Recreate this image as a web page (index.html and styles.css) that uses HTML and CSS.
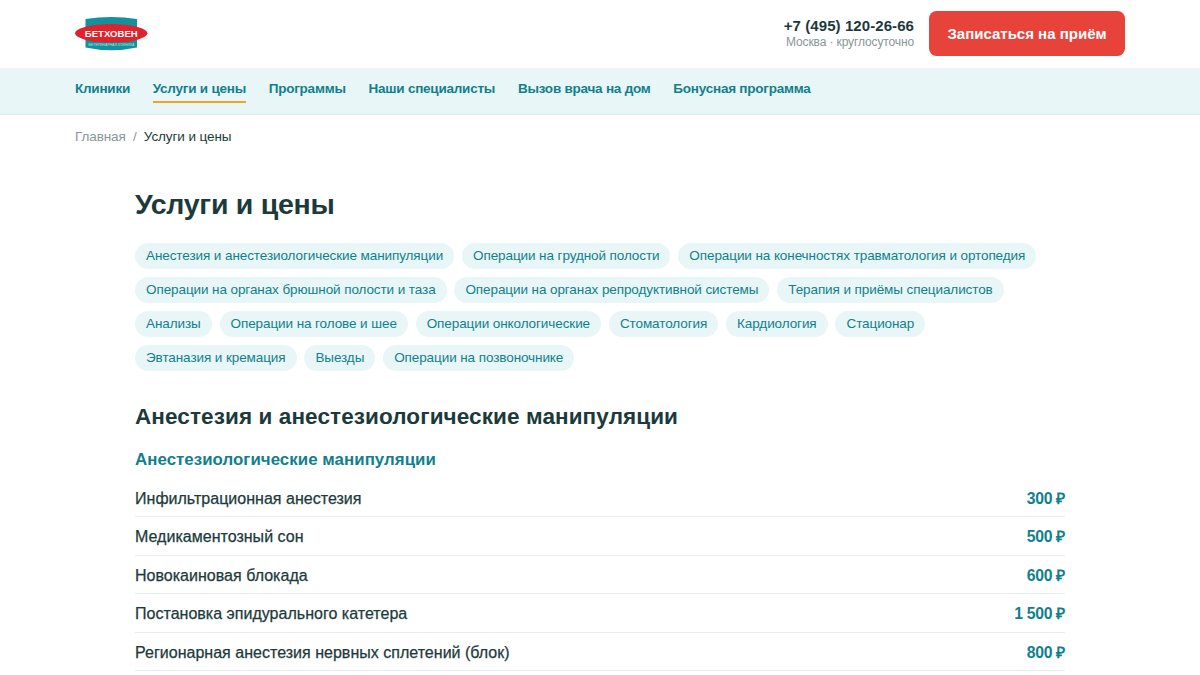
FILE: index.html
```html
<!DOCTYPE html>
<html lang="ru">
<head>
    <meta charset="UTF-8">
    <meta name="viewport" content="width=device-width, initial-scale=1.0">
    <title>Услуги и цены</title>
    <link rel="stylesheet" href="styles.css">
</head>
<body>
    <header class="header">
        <div class="container header-inner">
            <a class="logo" href="#" aria-label="Бетховен">
                <svg width="73" height="35" viewBox="0 0 73 35">
                    <path d="M10.500 3Q36.300 -1 62 3V31.500Q36.300 37 10.500 31.500Z" fill="#13919c"/>
                    <ellipse cx="36.200" cy="17.300" rx="36.200" ry="9.300" fill="#e1212b"/>
                    <text class="logo-name" x="36.300" y="20.800" textLength="53" lengthAdjust="spacingAndGlyphs">БЕТХОВЕН</text>
                    <text class="logo-sub" x="36.300" y="30.300" textLength="46" lengthAdjust="spacingAndGlyphs">ВЕТЕРИНАРНАЯ КЛИНИКА</text>
                </svg>
            </a>
            <div class="header-right">
                <div class="contact">
                    <a class="phone" href="tel:+74951202666">+7 (495) 120-26-66</a>
                    <div class="schedule">Москва · круглосуточно</div>
                </div>
                <button class="btn">Записаться на приём</button>
            </div>
        </div>
    </header>

    <nav class="nav">
        <div class="container nav-inner">
            <a href="#">Клиники</a>
            <a href="#" class="active">Услуги и цены</a>
            <a href="#">Программы</a>
            <a href="#">Наши специалисты</a>
            <a href="#">Вызов врача на дом</a>
            <a href="#">Бонусная программа</a>
        </div>
    </nav>

    <div class="container breadcrumbs">
        <a href="#">Главная</a>
        <span class="sep">/</span>
        <span class="current">Услуги и цены</span>
    </div>

    <main class="content">
        <h1>Услуги и цены</h1>

        <div class="chips">
            <a href="#">Анестезия и анестезиологические манипуляции</a>
            <a href="#">Операции на грудной полости</a>
            <a href="#">Операции на конечностях травматология и ортопедия</a>
            <a href="#">Операции на органах брюшной полости и таза</a>
            <a href="#">Операции на органах репродуктивной системы</a>
            <a href="#">Терапия и приёмы специалистов</a>
            <a href="#">Анализы</a>
            <a href="#">Операции на голове и шее</a>
            <a href="#">Операции онкологические</a>
            <a href="#">Стоматология</a>
            <a href="#">Кардиология</a>
            <a href="#">Стационар</a>
            <a href="#">Эвтаназия и кремация</a>
            <a href="#">Выезды</a>
            <a href="#">Операции на позвоночнике</a>
        </div>

        <h2>Анестезия и анестезиологические манипуляции</h2>
        <h3>Анестезиологические манипуляции</h3>

        <ul class="prices">
            <li><span class="name">Инфильтрационная анестезия</span><span class="price">300 ₽</span></li>
            <li><span class="name">Медикаментозный сон</span><span class="price">500 ₽</span></li>
            <li><span class="name">Новокаиновая блокада</span><span class="price">600 ₽</span></li>
            <li><span class="name">Постановка эпидурального катетера</span><span class="price">1 500 ₽</span></li>
            <li><span class="name">Регионарная анестезия нервных сплетений (блок)</span><span class="price">800 ₽</span></li>
        </ul>
    </main>
</body>
</html>
```
FILE: styles.css
```css
* {
    box-sizing: border-box;
}
body {
    margin: 0;
    font-family: "Liberation Sans", Arial, sans-serif;
    color: #1c3a3c;
    background: #fff;
    overflow: hidden;
}
a {
    color: inherit;
    text-decoration: none;
}
.container {
    width: 1050px;
    margin: 0 auto;
}
.header-inner {
    height: 67.5px;
    display: flex;
    align-items: center;
    justify-content: space-between;
}
.logo svg {
    display: block;
}
.logo-name {
    font-size: 9.5px;
    font-weight: bold;
    fill: #fff;
    text-anchor: middle;
}
.logo-sub {
    font-size: 4px;
    fill: #b5e0e3;
    text-anchor: middle;
}
.header-right {
    display: flex;
    align-items: center;
    gap: 15px;
}
.contact {
    text-align: right;
}
.phone {
    display: block;
    font-size: 15px;
    font-weight: bold;
    line-height: 17px;
    letter-spacing: 0.08px;
}
.schedule {
    font-size: 12px;
    line-height: 16px;
    letter-spacing: -0.12px;
    color: #8a9698;
}
.btn {
    width: 196px;
    height: 45px;
    padding: 0;
    border: none;
    border-radius: 7.5px;
    background: #e8433b;
    color: #fff;
    font-family: inherit;
    font-size: 15px;
    font-weight: bold;
    cursor: pointer;
}
.nav {
    height: 47.5px;
    background: #e8f6f7;
    border-bottom: 1px solid #dbebee;
}
.nav-inner {
    display: flex;
    gap: 22.75px;
    padding-top: 10px;
}
.nav a {
    font-size: 13.5px;
    font-weight: bold;
    line-height: 21px;
    letter-spacing: -0.23px;
    color: #12808c;
    padding-bottom: 2px;
    border-bottom: 2px solid transparent;
}
.nav a.active {
    border-bottom-color: #f0a526;
}
.breadcrumbs {
    display: flex;
    gap: 7.25px;
    padding-top: 12px;
    font-size: 13.5px;
    line-height: 19px;
    letter-spacing: -0.1px;
    color: #8a9698;
}
.breadcrumbs .current {
    color: #1c3a3c;
}
.content {
    width: 930px;
    margin: 0 auto;
    padding-top: 39px;
}
h1 {
    margin: 0 0 20px;
    font-size: 28.5px;
    line-height: 38px;
    letter-spacing: -0.27px;
}
.chips {
    display: flex;
    flex-wrap: wrap;
    gap: 7.9px;
}
.chips a {
    padding: 0 11px;
    font-size: 13.5px;
    line-height: 26px;
    letter-spacing: -0.09px;
    border-radius: 13px;
    background: #e8f6f7;
    color: #12808c;
}
h2 {
    margin: 31.5px 0 0;
    font-size: 22.5px;
    line-height: 30px;
    letter-spacing: 0.1px;
}
h3 {
    margin: 17px 0 0;
    font-size: 16.875px;
    line-height: 22px;
    letter-spacing: 0.04px;
    color: #12808c;
}
.prices {
    list-style: none;
    margin: 7.5px 0 0;
    padding: 0;
}
.prices li {
    display: flex;
    justify-content: space-between;
    height: 38.5px;
    line-height: 39.5px;
    font-size: 16px;
    border-bottom: 1px solid #e8eef0;
}
.name {
    letter-spacing: 0.02px;
    -webkit-text-stroke: 0.25px currentColor;
}
.price {
    font-size: 15.75px;
    font-weight: bold;
    letter-spacing: -0.3px;
    color: #12808c;
}
```
